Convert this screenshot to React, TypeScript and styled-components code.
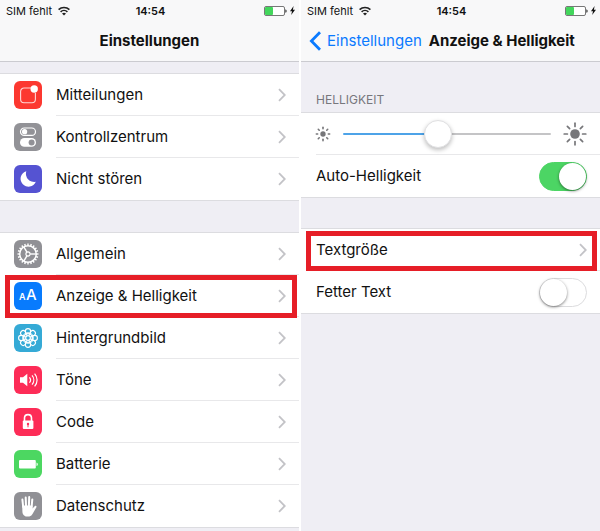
import React, { useState } from "react";
import styled, { createGlobalStyle } from "styled-components";

const line = "#dcdce0";
const grey = "#efeef4";

const GlobalStyle = createGlobalStyle`
  * { box-sizing: border-box; }
  html, body, #root { height: 100%; }
  body {
    margin: 0;
    background: #fff;
    color: #111;
    font-family: Inter, "Liberation Sans", sans-serif;
    font-size: 15px;
    line-height: 20px;
  }
`;

const Screens = styled.main`
  display: grid;
  grid-template-columns: 1fr 1fr;
  gap: 2px;
  min-height: 100vh;
`;

const Screen = styled.section`
  display: flex;
  flex-direction: column;
  min-width: 0;
  background: ${grey};
`;

const Header = styled.header`
  background: #f8f8f9;
  border-bottom: 1px solid #cbcbd0;
`;

const StatusBar = styled.div`
  display: grid;
  grid-template-columns: 1fr auto 1fr;
  align-items: center;
  height: 21px;
  padding: 0 4px 0 6px;
  font-size: 11px;
  line-height: 20px;
`;

const Carrier = styled.span`
  display: flex;
  align-items: center;
  gap: 6px;
`;

const Time = styled.time`
  font-weight: 600;
`;

const Power = styled.span`
  display: flex;
  justify-content: flex-end;
  align-items: center;
  gap: 3px;
`;

const NavBar = styled.div<{ $centered?: boolean }>`
  display: flex;
  align-items: center;
  justify-content: ${(p) => (p.$centered ? "center" : "flex-start")};
  gap: 7px;
  height: 40px;
  padding: 0 8px;
  white-space: nowrap;
`;

const Title = styled.h1`
  margin: 0;
  font-size: 15px;
  line-height: 20px;
  font-weight: 700;
  color: #111;
`;

const BackLink = styled.a`
  display: flex;
  align-items: center;
  gap: 6px;
  color: #0a7aff;
  text-decoration: none;
`;

const List = styled.ul<{ $gap: number }>`
  list-style: none;
  margin: ${(p) => p.$gap}px 0 0;
  padding: 0;
  background: #fff;
  box-shadow: 0 -1px 0 ${line}, 0 1px 0 ${line};
`;

const Item = styled.li<{ $indent: number }>`
  position: relative;
  height: 42px;
  &:not(:last-child) {
    background: linear-gradient(#e8e8ea, #e8e8ea) ${(p) => p.$indent}px 100% / 100% 1px no-repeat;
  }
`;

const RowLink = styled.a`
  display: flex;
  align-items: center;
  gap: 14px;
  height: 100%;
  padding: 0 13px 0 14px;
  color: inherit;
  text-decoration: none;
`;

const PlainRowLink = styled(RowLink)`
  padding-left: 15px;
`;

const RowText = styled.span`
  flex: 1;
  min-width: 0;
  white-space: nowrap;
`;

const Tile = styled.span<{ $color: string }>`
  display: grid;
  flex: none;
  width: 28px;
  height: 28px;
  border-radius: 6px;
  background: ${(p) => p.$color};
`;

const Frame = styled.span<{ $inset: string }>`
  position: absolute;
  z-index: 1;
  inset: ${(p) => p.$inset};
  border: 5px solid #e61e27;
  pointer-events: none;
`;

const GroupTitle = styled.h2`
  margin: 28px 15px 0;
  font-size: 12px;
  line-height: 20px;
  font-weight: 400;
  color: #77777c;
`;

const ControlRow = styled.div`
  display: flex;
  align-items: center;
  justify-content: space-between;
  height: 100%;
  padding: 0 13px 0 15px;
`;

const SliderRow = styled(ControlRow)`
  padding-left: 14px;
  gap: 12px;
`;

const Slider = styled.input`
  appearance: none;
  flex: 1;
  min-width: 0;
  height: 28px;
  margin: 0;
  background: transparent;
  &::-webkit-slider-runnable-track {
    height: 2px;
    border-radius: 1px;
    background: linear-gradient(to right, #4da3e8 var(--level), #c4c4c6 var(--level));
  }
  &::-webkit-slider-thumb {
    appearance: none;
    width: 28px;
    height: 28px;
    margin-top: -13px;
    border-radius: 50%;
    border: 1px solid #e0e0e2;
    background: #fff;
    box-shadow: 0 2px 4px rgba(0, 0, 0, 0.25);
  }
`;

const Switch = styled.input`
  appearance: none;
  flex: none;
  width: 48px;
  height: 29px;
  margin: 0;
  border-radius: 15px;
  border: 1px solid #dcdcde;
  background: #fff;
  &::before {
    content: "";
    display: block;
    width: 27px;
    height: 27px;
    border-radius: 50%;
    background: #fff;
    box-shadow: 0 1px 3px rgba(0, 0, 0, 0.5);
  }
  &:checked {
    border-color: #4cd564;
    background: #4cd564;
  }
  &:checked::before {
    margin-left: 19px;
  }
`;

const Wifi = () => (
  <svg width="12" height="10" viewBox="0 0 12 10" fill="none" stroke="#222" strokeWidth="1.6" aria-hidden="true">
    <path d="M.6 3.7a7.8 7.8 0 0 1 10.8 0M2.6 5.9a4.9 4.9 0 0 1 6.8 0" />
    <path d="M6 9.6 4 7.6a2.9 2.9 0 0 1 4 0z" fill="#222" stroke="none" />
  </svg>
);

const Battery = () => (
  <svg width="23" height="10" viewBox="0 0 23 10" aria-hidden="true">
    <rect x=".5" y=".5" width="20" height="9" rx="1.5" fill="#fff" stroke="#777" />
    <rect x="1" y="1" width="8" height="8" rx="1" fill="#43d65c" />
    <path d="M21.4 3.2c1.6.4 1.6 3.2 0 3.6z" fill="#222" />
  </svg>
);

const Bolt = () => (
  <svg width="5" height="9" viewBox="0 0 5 9" aria-hidden="true">
    <path d="M3.6 0 0 5.2h2L1.2 9 5 3.7H2.9z" fill="#111" />
  </svg>
);

const Chevron = () => (
  <svg width="8" height="14" viewBox="0 0 8 14" fill="none" stroke="#c3c3c7" strokeWidth="1.8" aria-hidden="true">
    <path d="m1 1.2 5.8 5.8L1 12.8" />
  </svg>
);

const BackArrow = () => (
  <svg width="12" height="20" viewBox="0 0 12 20" fill="none" stroke="#0a7aff" strokeWidth="2.8" aria-hidden="true">
    <path d="M11 1.2 2.4 10l8.6 8.8" />
  </svg>
);

const Sun = ({ size, radius, from, to, width }: { size: number; radius: number; from: number; to: number; width: number }) => (
  <svg width={size} height={size} viewBox="-12 -12 24 24" stroke="#77777a" strokeWidth={width} strokeLinecap="round" aria-hidden="true">
    <circle r={radius} fill="#77777a" stroke="none" />
    {[0, 45, 90, 135, 180, 225, 270, 315].map((a) => (
      <path key={a} d={`M0 ${from}V${to}`} transform={`rotate(${a})`} />
    ))}
  </svg>
);

const Glyph = ({ children }: { children: React.ReactNode }) => (
  <svg width="28" height="28" viewBox="0 0 28 28" fill="none" stroke="#fff" aria-hidden="true">
    {children}
  </svg>
);

const spokes = (n: number) => Array.from({ length: n }, (_, i) => (i * 360) / n);

const glyphs = {
  notify: (
    <>
      <path d="M17 7H10a3.4 3.4 0 0 0-3.4 3.4v7.9a3.4 3.4 0 0 0 3.4 3.4h8a3.4 3.4 0 0 0 3.4-3.4V12" strokeWidth="1.1" opacity=".8" />
      <circle cx="20.2" cy="8" r="3.7" fill="#fff" stroke="none" />
    </>
  ),
  control: (
    <>
      <rect x="6.5" y="5" width="15" height="7.4" rx="3.7" strokeWidth="1.2" />
      <circle cx="10.6" cy="8.7" r="2.6" fill="#fff" stroke="none" />
      <rect x="6" y="15" width="16" height="8.8" rx="4.4" fill="#fff" stroke="none" />
      <circle cx="17.6" cy="19.4" r="3" fill="#929297" stroke="none" />
    </>
  ),
  moon: <path d="M12.3 6.2a7.9 7.9 0 1 0 9.5 10.6A8.3 8.3 0 0 1 12.3 6.2z" fill="#fff" stroke="none" />,
  gear: (
    <g transform="translate(14 14)">
      <circle r="8.3" strokeWidth="1.5" />
      {spokes(20).map((a) => (
        <path key={a} d="M0-8.5v-2" strokeWidth="1.4" transform={`rotate(${a})`} />
      ))}
      <circle r="2.1" strokeWidth="1.2" />
      {[90, 210, 330].map((a) => (
        <path key={a} d="M0-2.2V-8" strokeWidth="1.4" transform={`rotate(${a})`} />
      ))}
    </g>
  ),
  text: (
    <g fill="#fff" stroke="none" fontFamily="Inter, sans-serif">
      <text x="5" y="18" fontSize="9" fontWeight="600">A</text>
      <text x="12" y="18" fontSize="15" fontWeight="500">A</text>
    </g>
  ),
  flower: (
    <g transform="translate(14 14)" strokeWidth="1.1">
      <circle r="2.2" />
      {spokes(8).map((a) => (
        <g key={a} transform={`rotate(${a})`}>
          <circle cy="-6.8" r="2.6" />
          <circle cy="-4" r="1.5" strokeWidth=".8" />
        </g>
      ))}
    </g>
  ),
  sound: (
    <>
      <path d="M6 11.2h3l4.3-3.5v12.6L9 16.8H6z" fill="#fff" stroke="none" />
      <path d="M15.4 11.3c1.4 1.6 1.4 3.8 0 5.4M18 9.4c2.4 2.7 2.4 6.5 0 9.2M20.6 7.6c3.3 3.8 3.3 9 0 12.8" strokeWidth="1.2" />
    </>
  ),
  lock: (
    <>
      <path d="M10.5 13v-2.9c0-4.6 7-4.6 7 0V13" strokeWidth="1.6" />
      <rect x="8.8" y="12.4" width="10.6" height="8.6" rx="1" fill="#fff" stroke="none" />
      <path d="M14 17v2.3" stroke="#ff2d58" strokeWidth="1" />
      <circle cx="14" cy="16" r="1.2" fill="#ff2d58" stroke="none" />
    </>
  ),
  battery: (
    <>
      <rect x="5" y="10" width="16.8" height="8.4" rx="1" fill="#fff" stroke="none" />
      <path d="M22.5 12.4c1.8.4 1.8 3.2 0 3.6z" fill="#fff" stroke="none" />
    </>
  ),
  hand: (
    <>
      <path d="M9.2 15 8.4 7.6M12 14l-.3-8.4M14.9 14l.3-8.9M17.6 15l.7-7.6" strokeWidth="2" strokeLinecap="round" />
      <path d="M8.2 13.5h10.3v3l2.4-2.4c.9-.8 2 .1 1.5 1.1l-3.6 6.4c-.8 1.4-1.9 2.8-3.4 2.8h-2.8c-2.4 0-4.2-2.4-4.2-5z" fill="#fff" stroke="none" />
    </>
  ),
};

type Entry = { label: string; color: string; glyph: keyof typeof glyphs; marked?: boolean };

const topEntries: Entry[] = [
  { label: "Mitteilungen", color: "#fc3830", glyph: "notify" },
  { label: "Kontrollzentrum", color: "#929297", glyph: "control" },
  { label: "Nicht stören", color: "#5553d2", glyph: "moon" },
];

const generalEntries: Entry[] = [
  { label: "Allgemein", color: "#909095", glyph: "gear" },
  { label: "Anzeige & Helligkeit", color: "#087bfd", glyph: "text", marked: true },
  { label: "Hintergrundbild", color: "#35aad6", glyph: "flower" },
  { label: "Töne", color: "#fd2c57", glyph: "sound" },
  { label: "Code", color: "#fd2c57", glyph: "lock" },
  { label: "Batterie", color: "#4cd761", glyph: "battery" },
  { label: "Datenschutz", color: "#909095", glyph: "hand" },
];

const Status = () => (
  <StatusBar>
    <Carrier>SIM fehlt <Wifi /></Carrier>
    <Time>14:54</Time>
    <Power><Battery /><Bolt /></Power>
  </StatusBar>
);

const Entries = ({ entries, gap }: { entries: Entry[]; gap: number }) => (
  <List $gap={gap}>
    {entries.map((e) => (
      <Item key={e.label} $indent={56}>
        <RowLink href="#">
          <Tile $color={e.color}><Glyph>{glyphs[e.glyph]}</Glyph></Tile>
          <RowText>{e.label}</RowText>
          <Chevron />
        </RowLink>
        {e.marked && <Frame $inset="0 2px -1px 5px" />}
      </Item>
    ))}
  </List>
);

export default function App() {
  const [level, setLevel] = useState(45);
  return (
    <>
      <GlobalStyle />
      <Screens>
        <Screen>
          <Header>
            <Status />
            <NavBar $centered><Title>Einstellungen</Title></NavBar>
          </Header>
          <nav>
            <Entries entries={topEntries} gap={12} />
            <Entries entries={generalEntries} gap={33} />
          </nav>
        </Screen>
        <Screen>
          <Header>
            <Status />
            <NavBar>
              <BackLink href="#"><BackArrow />Einstellungen</BackLink>
              <Title>Anzeige &amp; Helligkeit</Title>
            </NavBar>
          </Header>
          <GroupTitle>HELLIGKEIT</GroupTitle>
          <List $gap={3}>
            <Item $indent={15}>
              <SliderRow>
                <Sun size={16} radius={4} from={8} to={10} width={2.4} />
                <Slider
                  type="range"
                  min="0"
                  max="100"
                  aria-label="Helligkeit"
                  value={level}
                  onChange={(e) => setLevel(Number(e.target.value))}
                  style={{ "--level": `${level}%` } as React.CSSProperties}
                />
                <Sun size={24} radius={4.8} from={7.6} to={10.8} width={1.7} />
              </SliderRow>
            </Item>
            <Item $indent={15}>
              <ControlRow>
                <label htmlFor="auto">Auto-Helligkeit</label>
                <Switch id="auto" type="checkbox" role="switch" defaultChecked />
              </ControlRow>
            </Item>
          </List>
          <List $gap={32}>
            <Item $indent={15}>
              <PlainRowLink href="#">
                <RowText>Textgröße</RowText>
                <Chevron />
              </PlainRowLink>
              <Frame $inset="2px 3px 0 5px" />
            </Item>
            <Item $indent={15}>
              <ControlRow>
                <label htmlFor="bold">Fetter Text</label>
                <Switch id="bold" type="checkbox" role="switch" />
              </ControlRow>
            </Item>
          </List>
        </Screen>
      </Screens>
    </>
  );
}
